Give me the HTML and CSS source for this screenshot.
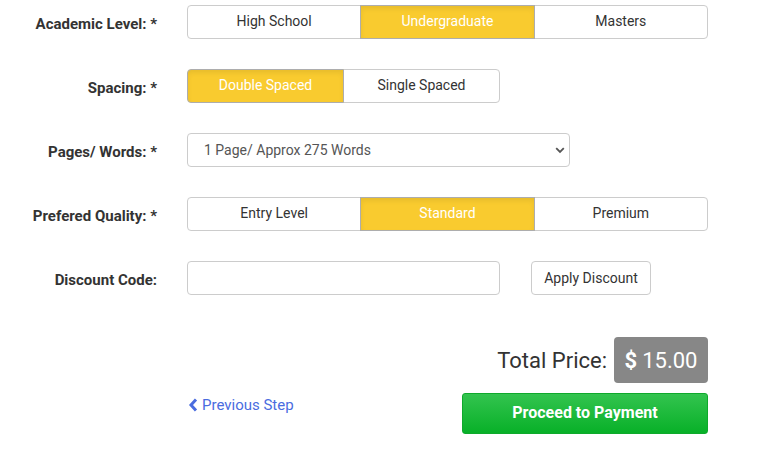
FILE: index.html
```html
<!DOCTYPE html>
<html>
<head>
<meta charset="utf-8">
<link rel="stylesheet" href="styles.css">
</head>
<body>
<form class="order-form">
  <div class="row">
    <label class="label">Academic Level: *</label>
    <div class="field">
      <div class="btn-group three">
        <button type="button" class="opt">High School</button>
        <button type="button" class="opt active">Undergraduate</button>
        <button type="button" class="opt">Masters</button>
      </div>
    </div>
  </div>
  <div class="row">
    <label class="label">Spacing: *</label>
    <div class="field">
      <div class="btn-group two">
        <button type="button" class="opt active">Double Spaced</button>
        <button type="button" class="opt">Single Spaced</button>
      </div>
    </div>
  </div>
  <div class="row">
    <label class="label">Pages/ Words: *</label>
    <div class="field">
      <div class="select-wrap">
        <select class="select">
          <option>1 Page/ Approx 275 Words</option>
        </select>
        <svg class="caret" width="10" height="7" viewBox="0 0 10 7"><path d="M1.2 1.2 L5 5 L8.8 1.2" fill="none" stroke="#555" stroke-width="1.8"/></svg>
      </div>
    </div>
  </div>
  <div class="row">
    <label class="label">Prefered Quality: *</label>
    <div class="field">
      <div class="btn-group three">
        <button type="button" class="opt">Entry Level</button>
        <button type="button" class="opt active">Standard</button>
        <button type="button" class="opt">Premium</button>
      </div>
    </div>
  </div>
  <div class="row">
    <label class="label">Discount Code:</label>
    <div class="field discount">
      <input class="input" type="text">
      <button type="button" class="apply">Apply Discount</button>
    </div>
  </div>
  <div class="row bottom">
    <div class="label"></div>
    <div class="field footer">
      <a class="prev" href="#"><svg width="10" height="14" viewBox="0 0 10 14"><path d="M8 1.5 L3 7 L8 12.5" fill="none" stroke="#4a6cdf" stroke-width="3"/></svg>Previous Step</a>
      <div class="checkout">
        <div class="total">Total Price: <span class="price"><b>$</b> 15.00</span></div>
        <button type="button" class="proceed">Proceed to Payment</button>
      </div>
    </div>
  </div>
</form>
</body>
</html>
```
FILE: styles.css
```css
* { box-sizing: border-box; }
body {
  margin: 0;
  font-family: Roboto, "Liberation Sans", Arial, sans-serif;
  color: #333;
  background: #fff;
}
.order-form {
  padding-top: 5px;
  width: 708px;
}
.row {
  display: grid;
  grid-template-columns: 187px 521px;
  align-items: center;
  margin-bottom: 30px;
  min-height: 34px;
}
.label {
  text-align: right;
  padding-right: 30px;
  font-size: 15px;
  font-weight: 700;
  color: #333;
  position: relative;
  top: 2px;
}
.btn-group {
  display: flex;
  height: 34px;
}
.btn-group.three { width: 521px; }
.btn-group.two { width: 313px; }
.opt {
  flex: 1 1 0;
  font-family: inherit;
  font-size: 14px;
  color: #333;
  background: #fff;
  border: 1px solid #ccc;
  margin-left: -1px;
  padding: 0 0 2px;
  cursor: pointer;
}
.opt:first-child { margin-left: 0; border-radius: 4px 0 0 4px; }
.opt:last-child { border-radius: 0 4px 4px 0; }
.opt.active {
  background: #f9cb2f;
  color: #fff;
  border-color: #adadad;
  box-shadow: inset 0 3px 5px rgba(0,0,0,0.07);
  position: relative;
}
.select-wrap {
  position: relative;
  width: 383px;
  height: 34px;
}
.select {
  appearance: none;
  -webkit-appearance: none;
  width: 100%;
  height: 34px;
  border: 1px solid #ccc;
  border-radius: 4px;
  background: #fff;
  font-family: inherit;
  font-size: 14px;
  color: #555;
  padding: 0 30px 1px 16px;
}
.caret {
  position: absolute;
  right: 5px;
  top: 14px;
  pointer-events: none;
}
.discount {
  display: flex;
  align-items: center;
  gap: 31px;
}
.input {
  width: 313px;
  height: 34px;
  border: 1px solid #ccc;
  border-radius: 4px;
  font-family: inherit;
  font-size: 14px;
}
.apply {
  width: 120px;
  height: 34px;
  border: 1px solid #ccc;
  border-radius: 4px;
  background: #fff;
  font-family: inherit;
  font-size: 14px;
  color: #333;
  padding: 0 0 1px;
}
.row.bottom {
  margin-top: 13px;
}
.footer {
  display: flex;
  justify-content: space-between;
  align-items: flex-end;
  padding-top: 12px;
}
.prev {
  display: flex;
  align-items: center;
  gap: 4px;
  font-size: 15px;
  color: #4a6cdf;
  text-decoration: none;
  margin-bottom: 20px;
  margin-left: 1px;
}
.checkout {
  display: flex;
  flex-direction: column;
  align-items: flex-end;
  gap: 10px;
}
.total {
  display: flex;
  align-items: center;
  gap: 7px;
  font-size: 22px;
  color: #333;
}
.price {
  display: inline-flex;
  align-items: center;
  justify-content: center;
  width: 94px;
  height: 46px;
  background: #878787;
  color: #fff;
  border-radius: 4px;
  font-size: 22px;
  padding-top: 1px;
}
.price b { font-weight: 700; margin-right: 5px; }
.proceed {
  width: 246px;
  height: 41px;
  border: 1px solid #0fa92c;
  border-radius: 3px;
  background: linear-gradient(#33c44f, #08b028);
  color: #fff;
  font-family: inherit;
  font-size: 16px;
  font-weight: 700;
  padding: 0 0 2px;
}
```
